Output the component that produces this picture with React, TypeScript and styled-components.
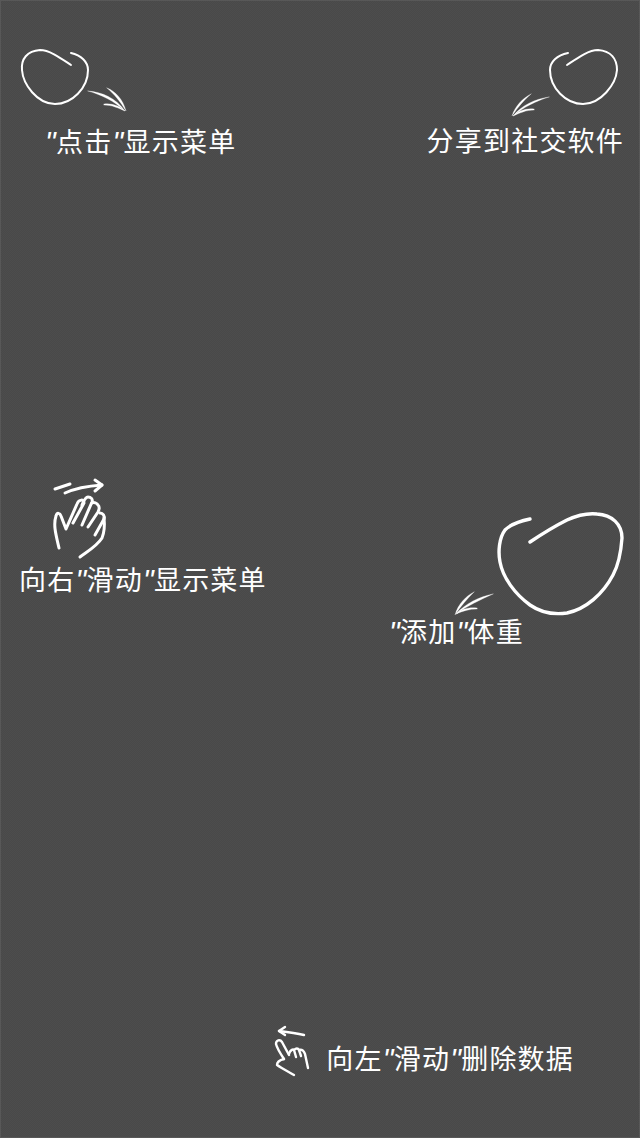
import React from 'react';
import styled, { createGlobalStyle } from 'styled-components';

const GlobalStyle = createGlobalStyle`
	html, body {
		margin: 0;
		padding: 0;
		background: #4b4b4b;
	}
`;

const Page = styled.div`
	display: flex;
	flex-direction: column;
	box-sizing: border-box;
	width: 640px;
	height: 1138px;
	overflow: hidden;
	color: #fff;
	font-family: 'Liberation Sans', 'Noto Sans CJK SC', sans-serif;
	background: repeating-conic-gradient(#494949 0 25%, #4d4d4d 0 50%) 0 0 / 2px 2px;
	box-shadow: inset 0 0 0 1px #585858;
`;

const TopRow = styled.div`
	display: flex;
	justify-content: space-between;
	padding: 44px 16px 0 16px;
`;

const MiddleRow = styled.div`
	display: flex;
	justify-content: space-between;
	align-items: flex-start;
	padding: 0 15px 0 19px;
	margin-top: 318px;
`;

const BottomRow = styled.div`
	display: flex;
	justify-content: flex-end;
	align-items: flex-end;
	gap: 10px;
	margin-top: auto;
	padding: 0 66px 58px 0;
`;

const Hint = styled.div<{ $top?: number; $end?: boolean }>`
	display: flex;
	flex-direction: column;
	align-items: ${(p) => (p.$end ? 'flex-end' : 'flex-start')};
	padding-top: ${(p) => p.$top ?? 0}px;
`;

const Sketch = styled.svg`
	display: block;
	flex: none;
	fill: none;
	stroke: #fff;
	stroke-linecap: round;
	stroke-linejoin: round;
`;

const Taper = styled.path`
	fill: #fff;
	stroke-width: 0.3;
`;

const Label = styled.div<{ $indent?: number; $tight?: boolean }>`
	margin-left: ${(p) => p.$indent ?? 0}px;
	margin-bottom: ${(p) => (p.$tight ? 5 : 0)}px;
	font-size: 27px;
	line-height: 30px;
	letter-spacing: 1.2px;
	white-space: nowrap;
`;

const Quote = styled.span`
	font-size: 30px;
	font-style: italic;
	line-height: 20px;
	letter-spacing: 0.4px;
`;

const App = () => {
	return (
		<Page>
			<GlobalStyle />
			<TopRow>
				<Hint>
					<Sketch width={116} height={84} viewBox="16 44 116 84">
						<path
							strokeWidth={2}
							d="M71 65C62 59 50 50 40 50C27 51 21 59 22 70C23 84 37 104 55 104C72 104 88 88 88 70C88 62 81 55 71 53"
						/>
						<Taper d="M88 91C102 92 116 98 125 111C114 101 102 95 88 91Z" />
						<Taper d="M107 88C115 91 123 99 126 111C120 101 114 94 107 88Z" />
						<Taper d="M104 104C112 103 120 106 125 111C118 108 112 105 104 105Z" />
					</Sketch>
					<Label $indent={29}>
						<Quote>"</Quote>点击<Quote>"</Quote>显示菜单
					</Label>
				</Hint>
				<Hint $end>
					<Sketch width={122} height={83} viewBox="500 44 122 83">
						<path
							strokeWidth={2}
							d="M565 65C574 59 586 50 596 50C609 51 615 59 615 70C614 84 599 104 581 104C564 104 548 88 548 70C548 62 555 55 566 53"
						/>
						<Taper d="M547 97C533 99 520 105 511 116C522 107 534 101 547 97Z" />
						<Taper d="M529 94C521 98 513 106 510 116C516 107 522 100 529 94Z" />
						<Taper d="M532 109C524 108 516 111 511 116C518 113 524 110 532 110Z" />
					</Sketch>
					<Label>分享到社交软件</Label>
				</Hint>
			</TopRow>
			<MiddleRow>
				<Hint>
					<Sketch width={90} height={90} viewBox="19 476 90 90" strokeWidth={3}>
						<path d="M55 489L70 484" />
						<path d="M65 493C76 488 88 486 102 485" />
						<path d="M95 480L102 485L95 491" />
						<path d="M59 548C56 535 53 525 56 516C57 512 60 513 61 516L66 529L77 504C79 499 84 499 84 503L73 523" />
						<path d="M82 505C84 500 86 497 88 497C91 497 93 499 92 502L82 525" />
						<path d="M92 503C94 502 97 503 98 505C100 507 99 510 98 512L88 527" />
						<path d="M100 513C103 513 105 516 104 519L95 535" />
						<path d="M104 518C105 527 104 533 102 538C97 546 88 551 80 557" />
					</Sketch>
					<Label>
						向右<Quote>"</Quote>滑动<Quote>"</Quote>显示菜单
					</Label>
				</Hint>
				<Hint $top={34}>
					<Sketch width={236} height={108} viewBox="389 510 236 108">
						<path
							strokeWidth={3.4}
							d="M530 542C542 534 555 526 567 520C578 515 588 513 597 514C612 515 622 524 622 538C621 552 619 564 613 575C603 594 586 609 567 613C553 615 540 612 530 605C515 594 503 578 500 562C498 552 499 538 505 530C511 524 520 521 530 519"
						/>
						<Taper d="M493 594C479 597 466 603 456 614C467 606 480 600 493 594Z" />
						<Taper d="M474 592C466 596 458 604 455 615C461 606 467 599 474 592Z" />
						<Taper d="M477 608C469 607 461 609 456 614C463 611 469 609 477 609Z" />
					</Sketch>
					<Label>
						<Quote>"</Quote>添加<Quote>"</Quote>体重
					</Label>
				</Hint>
			</MiddleRow>
			<BottomRow>
				<Sketch width={45} height={56} viewBox="272 1024 45 56" strokeWidth={2.4}>
					<path d="M305 1035C297 1033 289 1032 280 1031" />
					<path d="M286 1027L280 1031L286 1035" />
					<path d="M285 1059C281 1053 278 1048 277 1044C277 1040 281 1039 283 1042L290 1055" />
					<path d="M285 1059C281 1060 278 1062 278 1065C284 1069 290 1072 295 1075" />
					<path d="M290 1054C291 1050 294 1049 295 1050L297 1057" />
					<path d="M295 1050C297 1048 299 1048 300 1050L302 1056" />
					<path d="M300 1050C303 1049 305 1051 306 1054L309 1068" />
				</Sketch>
				<Label $tight>
					向左<Quote>"</Quote>滑动<Quote>"</Quote>删除数据
				</Label>
			</BottomRow>
		</Page>
	);
};

export default App;
